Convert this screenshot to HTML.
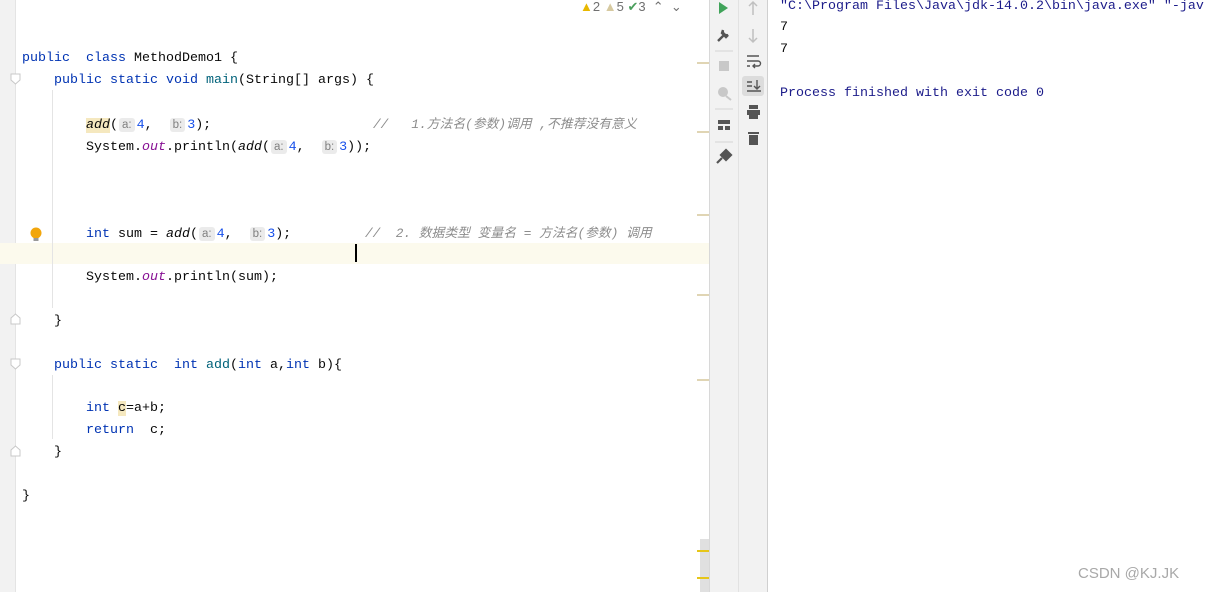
<!DOCTYPE html>
<html><head><meta charset="utf-8"><style>
*{margin:0;padding:0;box-sizing:border-box}
body{width:1212px;height:592px;background:#fff;position:relative;overflow:hidden;font-family:"Liberation Mono","Noto Sans CJK SC",monospace;font-size:13.33px;color:#080808}
.a{position:absolute;white-space:pre;line-height:22px}
.k{color:#0033b3}
.f{color:#00627a}
.n{color:#1750eb}
.i{font-style:italic}
.o{color:#871094;font-style:italic}
.c{color:#8c8c8c;font-style:italic;font-size:12.8px}
.h{font-family:"Liberation Sans",sans-serif;font-size:11.5px;color:#808080;background:#ebebeb;border-radius:3px;padding:1px 3px;margin:0 2px 0 1px}
.mk{position:absolute;left:697px;width:12px;height:2px;background:#e0d5b4}
.ic{position:absolute}
</style></head><body>
<div style="position:absolute;left:0;top:0;width:16px;height:592px;background:#f2f2f2;border-right:1px solid #e4e4e4"></div>
<div style="position:absolute;left:0;top:243px;width:709px;height:21px;background:#fcfaed"></div>
<div style="position:absolute;left:52px;top:90px;width:1px;height:218px;background:#e4e4e4"></div>
<div style="position:absolute;left:52px;top:375px;width:1px;height:64px;background:#e4e4e4"></div>
<div style="position:absolute;left:355px;top:244px;width:2px;height:18px;background:#000"></div>
<svg class="ic" style="left:10px;top:73px" width="11" height="12"><path d="M1 1h9v6l-4.5 4L1 7z" fill="#fff" stroke="#c8c8c8"/></svg>
<svg class="ic" style="left:10px;top:313px" width="11" height="12"><path d="M1 11h9V5L5.5 1 1 5z" fill="#fff" stroke="#c8c8c8"/></svg>
<svg class="ic" style="left:10px;top:358px" width="11" height="12"><path d="M1 1h9v6l-4.5 4L1 7z" fill="#fff" stroke="#c8c8c8"/></svg>
<svg class="ic" style="left:10px;top:445px" width="11" height="12"><path d="M1 11h9V5L5.5 1 1 5z" fill="#fff" stroke="#c8c8c8"/></svg>
<svg class="ic" style="left:29px;top:227px" width="14" height="16"><circle cx="7" cy="6" r="5.5" fill="#f2a60c"/><rect x="4.5" y="11" width="5" height="3" fill="#999"/></svg>

<div class="a" style="left:22px;top:48px"><span class="k">public</span>  <span class="k">class</span> MethodDemo1 {</div>
<div class="a" style="left:54px;top:70px"><span class="k">public static void</span> <span class="f">main</span>(String[] args) {</div>
<div class="a" style="left:86px;top:114px"><span class="i" style="background:#f5e8bf">add</span>(<span class="h">a:</span><span class="n">4</span>,  <span class="h">b:</span><span class="n">3</span>);</div>
<div class="a c" style="left:373px;top:114px">//   1.方法名(参数)调用 ,不推荐没有意义</div>
<div class="a" style="left:86px;top:136px">System.<span class="o">out</span>.println(<span class="i">add</span>(<span class="h">a:</span><span class="n">4</span>,  <span class="h">b:</span><span class="n">3</span>));</div>
<div class="a" style="left:86px;top:223px"><span class="k">int</span> sum = <span class="i">add</span>(<span class="h">a:</span><span class="n">4</span>,  <span class="h">b:</span><span class="n">3</span>);</div>
<div class="a c" style="left:365px;top:223px">//  2. 数据类型 变量名 = 方法名(参数) 调用</div>
<div class="a" style="left:86px;top:267px">System.<span class="o">out</span>.println(sum);</div>
<div class="a" style="left:54px;top:311px">}</div>
<div class="a" style="left:54px;top:355px"><span class="k">public static</span>  <span class="k">int</span> <span class="f">add</span>(<span class="k">int</span> a,<span class="k">int</span> b){</div>
<div class="a" style="left:86px;top:398px"><span class="k">int</span> <span style="background:#f5e8bf">c</span>=a+b;</div>
<div class="a" style="left:86px;top:420px"><span class="k">return</span>  c;</div>
<div class="a" style="left:54px;top:442px">}</div>
<div class="a" style="left:22px;top:486px">}</div>

<div class="a" style="left:580px;top:-4px;font-family:'Liberation Sans',sans-serif;font-size:13px;color:#707070"><span style="color:#e8b800">▲</span>2 <span style="color:#d6c9a0">▲</span>5 <span style="color:#4a9e5c">✔</span>3 &nbsp;⌃ &nbsp;⌄</div>

<div class="mk" style="top:62px"></div><div class="mk" style="top:131px"></div>
<div class="mk" style="top:214px"></div><div class="mk" style="top:294px"></div>
<div class="mk" style="top:379px"></div>
<div style="position:absolute;left:700px;top:539px;width:9px;height:53px;background:#e0e0e0"></div>
<div class="mk" style="top:550px;background:#e6c619"></div>
<div class="mk" style="top:577px;background:#e6c619"></div>

<div style="position:absolute;left:709px;top:0;width:30px;height:592px;background:#f2f2f2;border-left:1px solid #d8d8d8;border-right:1px solid #e2e2e2"></div>
<div style="position:absolute;left:739px;top:0;width:29px;height:592px;background:#f2f2f2;border-right:1px solid #d0d0d0"></div>
<svg class="ic" style="left:709px;top:0" width="30" height="170">
<path d="M10 2l9 6-9 6z" fill="#40a35a"/>
<path d="M9 41l7-7M14 30a4 4 0 0 0 5 5l-2 2-4-4z" stroke="#555" stroke-width="2.4" fill="#555"/>
<line x1="6" y1="51" x2="24" y2="51" stroke="#d4d4d4"/>
<rect x="10" y="61" width="10" height="10" fill="#c8c8c8"/>
<circle cx="14" cy="92" r="5" fill="#c8c8c8"/><path d="M17 96l5 4" stroke="#c8c8c8" stroke-width="2"/>
<line x1="6" y1="109" x2="24" y2="109" stroke="#d4d4d4"/>
<rect x="9" y="120" width="12" height="4" fill="#555"/><rect x="9" y="126" width="5" height="4" fill="#555"/><rect x="16" y="126" width="5" height="4" fill="#555"/>
<line x1="6" y1="142" x2="24" y2="142" stroke="#d4d4d4"/>
<path d="M8 163l5-5M12 155l5-5 5 5-5 5z" stroke="#555" stroke-width="2.2" fill="#555"/>
</svg>
<svg class="ic" style="left:739px;top:0" width="29" height="150">
<path d="M14 15V2M10 6l4-4 4 4" stroke="#c0c0c0" stroke-width="1.5" fill="none"/>
<path d="M14 29v13M10 38l4 4 4-4" stroke="#c0c0c0" stroke-width="1.5" fill="none"/>
<path d="M8 56h12M8 61h11a2.5 2.5 0 0 1 0 5h-5M16 64l-2 2 2 2M8 66h3" stroke="#555" stroke-width="1.4" fill="none"/>
<rect x="3" y="76" width="22" height="20" rx="3" fill="#dcdcdc"/>
<path d="M8 82h5M8 86h5M18 80v9M15 86l3 3 3-3M8 91h14" stroke="#555" stroke-width="1.4" fill="none"/>
<rect x="10" y="105" width="9" height="4" fill="#555"/><rect x="8" y="110" width="13" height="5" fill="#555"/><rect x="10" y="115" width="9" height="4" fill="#555"/>
<rect x="9" y="132" width="11" height="2" fill="#555"/><rect x="10" y="135" width="9" height="10" fill="#555"/>
</svg>

<div class="a" style="left:780px;top:-4px;color:#1c1c8a">"C:\Program Files\Java\jdk-14.0.2\bin\java.exe" "-jav</div>
<div class="a" style="left:780px;top:17px">7</div>
<div class="a" style="left:780px;top:39px">7</div>
<div class="a" style="left:780px;top:83px;color:#1c1c8a">Process finished with exit code 0</div>
<div class="a" style="left:1078px;top:563px;font-family:'Liberation Sans',sans-serif;font-size:15px;color:#a8a8a8">CSDN @KJ.JK</div>
</body></html>
